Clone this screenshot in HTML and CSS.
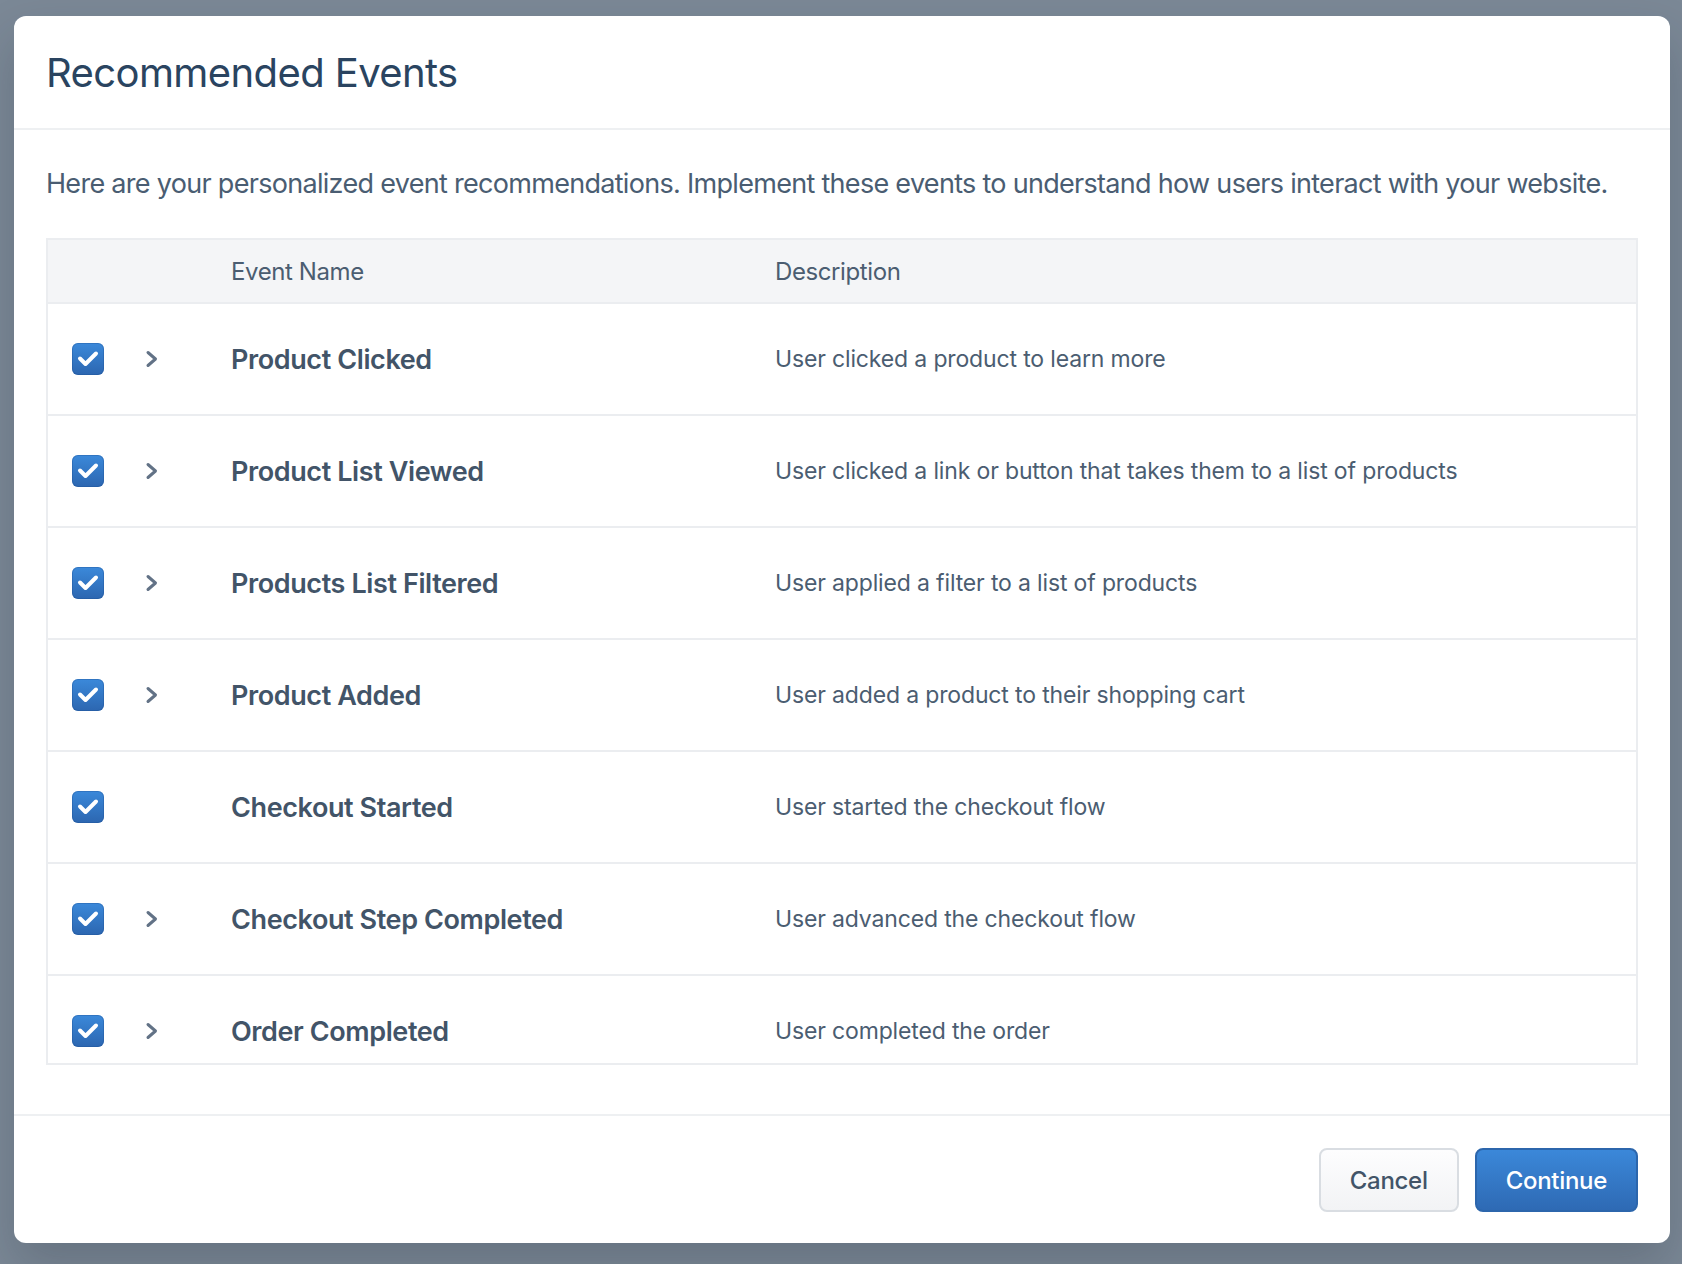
FILE: index.html
```html
<!DOCTYPE html>
<html lang="en">
<head>
<meta charset="utf-8">
<title>Recommended Events</title>
<link rel="stylesheet" href="styles.css">
</head>
<body>
<div class="modal">
  <div class="modal-header">
    <h1 class="modal-title">Recommended Events</h1>
  </div>
  <div class="modal-body">
    <p class="intro">Here are your personalized event recommendations. Implement these events to understand how users interact with your website.</p>
    <div class="table">
      <div class="row head">
        <div class="cell"></div>
        <div class="cell"></div>
        <div class="cell name-col">Event Name</div>
        <div class="cell desc-col">Description</div>
      </div>

      <div class="row">
        <div class="cell check-cell"><span class="check"><svg viewBox="0 0 32 32" width="32" height="32"><path d="M8 15.5 L13.5 21 L24 10.5" fill="none" stroke="#fff" stroke-width="4" stroke-linecap="round" stroke-linejoin="round"/></svg></span></div>
        <div class="cell chev-cell"><svg class="chev" viewBox="0 0 14 18" width="14" height="18"><path d="M3 2.5 L10.5 9 L3 15.5" fill="none" stroke="#627286" stroke-width="3" stroke-linecap="round" stroke-linejoin="round"/></svg></div>
        <div class="cell name-col event-name">Product Clicked</div>
        <div class="cell desc-col event-desc">User clicked a product to learn more</div>
      </div>

      <div class="row">
        <div class="cell check-cell"><span class="check"><svg viewBox="0 0 32 32" width="32" height="32"><path d="M8 15.5 L13.5 21 L24 10.5" fill="none" stroke="#fff" stroke-width="4" stroke-linecap="round" stroke-linejoin="round"/></svg></span></div>
        <div class="cell chev-cell"><svg class="chev" viewBox="0 0 14 18" width="14" height="18"><path d="M3 2.5 L10.5 9 L3 15.5" fill="none" stroke="#627286" stroke-width="3" stroke-linecap="round" stroke-linejoin="round"/></svg></div>
        <div class="cell name-col event-name">Product List Viewed</div>
        <div class="cell desc-col event-desc">User clicked a link or button that takes them to a list of products</div>
      </div>

      <div class="row">
        <div class="cell check-cell"><span class="check"><svg viewBox="0 0 32 32" width="32" height="32"><path d="M8 15.5 L13.5 21 L24 10.5" fill="none" stroke="#fff" stroke-width="4" stroke-linecap="round" stroke-linejoin="round"/></svg></span></div>
        <div class="cell chev-cell"><svg class="chev" viewBox="0 0 14 18" width="14" height="18"><path d="M3 2.5 L10.5 9 L3 15.5" fill="none" stroke="#627286" stroke-width="3" stroke-linecap="round" stroke-linejoin="round"/></svg></div>
        <div class="cell name-col event-name">Products List Filtered</div>
        <div class="cell desc-col event-desc">User applied a filter to a list of products</div>
      </div>

      <div class="row">
        <div class="cell check-cell"><span class="check"><svg viewBox="0 0 32 32" width="32" height="32"><path d="M8 15.5 L13.5 21 L24 10.5" fill="none" stroke="#fff" stroke-width="4" stroke-linecap="round" stroke-linejoin="round"/></svg></span></div>
        <div class="cell chev-cell"><svg class="chev" viewBox="0 0 14 18" width="14" height="18"><path d="M3 2.5 L10.5 9 L3 15.5" fill="none" stroke="#627286" stroke-width="3" stroke-linecap="round" stroke-linejoin="round"/></svg></div>
        <div class="cell name-col event-name">Product Added</div>
        <div class="cell desc-col event-desc">User added a product to their shopping cart</div>
      </div>

      <div class="row">
        <div class="cell check-cell"><span class="check"><svg viewBox="0 0 32 32" width="32" height="32"><path d="M8 15.5 L13.5 21 L24 10.5" fill="none" stroke="#fff" stroke-width="4" stroke-linecap="round" stroke-linejoin="round"/></svg></span></div>
        <div class="cell chev-cell"></div>
        <div class="cell name-col event-name">Checkout Started</div>
        <div class="cell desc-col event-desc">User started the checkout flow</div>
      </div>

      <div class="row">
        <div class="cell check-cell"><span class="check"><svg viewBox="0 0 32 32" width="32" height="32"><path d="M8 15.5 L13.5 21 L24 10.5" fill="none" stroke="#fff" stroke-width="4" stroke-linecap="round" stroke-linejoin="round"/></svg></span></div>
        <div class="cell chev-cell"><svg class="chev" viewBox="0 0 14 18" width="14" height="18"><path d="M3 2.5 L10.5 9 L3 15.5" fill="none" stroke="#627286" stroke-width="3" stroke-linecap="round" stroke-linejoin="round"/></svg></div>
        <div class="cell name-col event-name">Checkout Step Completed</div>
        <div class="cell desc-col event-desc">User advanced the checkout flow</div>
      </div>

      <div class="row">
        <div class="cell check-cell"><span class="check"><svg viewBox="0 0 32 32" width="32" height="32"><path d="M8 15.5 L13.5 21 L24 10.5" fill="none" stroke="#fff" stroke-width="4" stroke-linecap="round" stroke-linejoin="round"/></svg></span></div>
        <div class="cell chev-cell"><svg class="chev" viewBox="0 0 14 18" width="14" height="18"><path d="M3 2.5 L10.5 9 L3 15.5" fill="none" stroke="#627286" stroke-width="3" stroke-linecap="round" stroke-linejoin="round"/></svg></div>
        <div class="cell name-col event-name">Order Completed</div>
        <div class="cell desc-col event-desc">User completed the order</div>
      </div>
    </div>
  </div>
  <div class="modal-footer">
    <button class="btn btn-secondary" type="button">Cancel</button>
    <button class="btn btn-primary" type="button">Continue</button>
  </div>
</div>
</body>
</html>
```

FILE: styles.css
```css
* { box-sizing: border-box; }

html, body {
  margin: 0;
  height: 100%;
}

body {
  background: #7b8896;
  font-family: Inter, "Noto Sans", "Liberation Sans", sans-serif;
  padding: 16px 12px 0 14px;
  overflow: hidden;
}

.modal {
  background: #fff;
  border-radius: 12px;
  box-shadow: 0 24px 48px rgba(30, 40, 55, 0.22);
  display: flex;
  flex-direction: column;
}

.modal-header {
  height: 114px;
  flex: none;
  display: flex;
  align-items: center;
  padding: 0 32px;
  border-bottom: 2px solid #eef0f2;
}

.modal-title {
  margin: 0;
  font-size: 40px;
  font-weight: 400;
  color: #2a4460;
  letter-spacing: -0.6px;
}

.modal-body {
  padding: 34px 32px 49px;
}

.intro {
  margin: 0 0 34px;
  font-size: 27px;
  line-height: 40px;
  letter-spacing: -0.7px;
  color: #4a5d72;
  white-space: nowrap;
}

.table {
  height: 827px;
  overflow: hidden;
  border: 2px solid #ebedf0;
}

.row {
  display: grid;
  grid-template-columns: 80px 48px 599px 1fr;
  align-items: center;
  height: 112px;
  border-bottom: 2px solid #ebedf0;
}

.row.head {
  height: 64px;
  background: #f4f5f7;
  font-size: 24px;
  letter-spacing: -0.4px;
  color: #4b5d71;
}

.check-cell {
  padding-left: 24px;
  display: flex;
}

.chev-cell {
  display: flex;
  justify-content: center;
}

.name-col {
  padding-left: 55px;
}

.check {
  width: 32px;
  height: 32px;
  border-radius: 6px;
  background: linear-gradient(#3b89da, #2c66b0);
  box-shadow: inset 0 0 0 1px rgba(30, 80, 150, 0.35);
  display: block;
}

.check svg { display: block; }
.chev { display: block; }

.event-name {
  font-size: 27px;
  font-weight: 600;
  letter-spacing: -0.4px;
  color: #425468;
}

.event-desc {
  font-size: 23px;
  letter-spacing: -0.15px;
  color: #4b5d71;
}

.modal-footer {
  border-top: 2px solid #eef0f2;
  padding: 32px 32px 31px;
  display: flex;
  justify-content: flex-end;
  gap: 16px;
}

.btn {
  height: 64px;
  border-radius: 8px;
  font-family: Inter, "Noto Sans", "Liberation Sans", sans-serif;
  font-size: 24px;
  font-weight: 500;
  letter-spacing: -0.3px;
}

.btn-secondary {
  padding: 0 29px;
  background: linear-gradient(#fdfdfe, #f2f3f5);
  border: 2px solid #d9dde2;
  color: #425468;
}

.btn-primary {
  padding: 0 29px;
  background: linear-gradient(#3b88d9, #2e6ab4);
  border: 2px solid #2c66ac;
  color: #fff;
}
```
